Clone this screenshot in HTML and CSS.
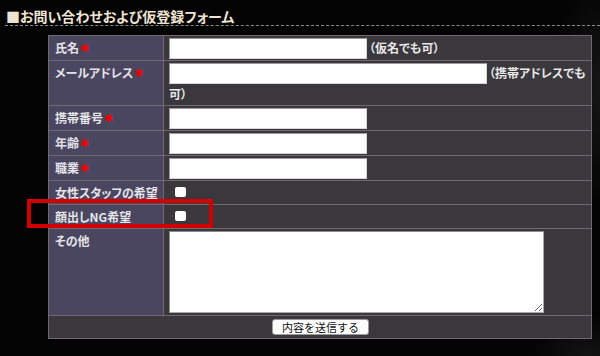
FILE: index.html
```html
<!DOCTYPE html>
<html lang="ja">
<head>
<meta charset="utf-8">
<title>お問い合わせおよび仮登録フォーム</title>
<link rel="stylesheet" href="styles.css">
</head>
<body>
<div class="page">
  <h2 class="title">■お問い合わせおよび仮登録フォーム</h2>
  <table class="form">
    <tr>
      <th>氏名<span class="req">✱</span></th>
      <td class="field"><input class="text short" type="text"><span class="note">（仮名でも可）</span></td>
    </tr>
    <tr>
      <th>メールアドレス<span class="req">✱</span></th>
      <td class="field"><input class="text long" type="text"><span class="note nowrap">（携帯アドレスでも</span><br><span class="note">可）</span></td>
    </tr>
    <tr>
      <th>携帯番号<span class="req">✱</span></th>
      <td class="field"><input class="text short" type="text"></td>
    </tr>
    <tr>
      <th>年齢<span class="req">✱</span></th>
      <td class="field"><input class="text short" type="text"></td>
    </tr>
    <tr>
      <th>職業<span class="req">✱</span></th>
      <td class="field"><input class="text short" type="text"></td>
    </tr>
    <tr>
      <th class="check-label">女性スタッフの希望</th>
      <td class="check"><input class="box" type="checkbox"></td>
    </tr>
    <tr>
      <th class="check-label">顔出しNG希望</th>
      <td class="check"><input class="box" type="checkbox"></td>
    </tr>
    <tr>
      <th>その他</th>
      <td class="area"><textarea class="memo"></textarea></td>
    </tr>
    <tr>
      <td class="submit" colspan="2"><button class="send" type="button">内容を送信する</button></td>
    </tr>
  </table>
</div>
<div class="highlight"></div>
</body>
</html>
```

FILE: styles.css
```css
html, body {
  margin: 0;
  padding: 0;
}

body {
  width: 600px;
  height: 356px;
  overflow: hidden;
  position: relative;
  background:
    radial-gradient(ellipse 50px 120px at 100% 25%, #161616 0, rgba(20,20,20,0) 100%),
    radial-gradient(ellipse 60px 40px at 98% 100%, #141414 0, rgba(20,20,20,0) 100%),
    #030303;
  font-family: "Noto Sans CJK JP", "Noto Sans", sans-serif;
  font-feature-settings: "palt";
}

.page {
  padding-left: 5px;
}

.title {
  margin: 0;
  padding: 8px 0 1px 1px;
  font-size: 14px;
  line-height: 16px;
  font-weight: bold;
  color: #efe3d2;
  border-bottom: 1px dashed #8c8c8c;
}

.form {
  margin: 9px 0 0 43px;
  width: 544px;
  border-collapse: collapse;
  table-layout: fixed;
}

.form th,
.form td {
  border: 1px solid #6d6a72;
}

.form th {
  width: 108px;
  padding: 5px 0 0 6px;
  background: #4b4660;
  color: #e4e4e8;
  font-size: 12px;
  line-height: 14px;
  font-weight: bold;
  text-align: left;
  vertical-align: top;
  white-space: nowrap;
}

.req {
  color: #f00000;
  font-family: "DejaVu Sans", sans-serif;
  font-size: 11px;
  margin-left: 1px;
  position: relative;
  top: -1px;
}

.form td {
  background: #3a373d;
  color: #e8e8e8;
  font-size: 12px;
  font-weight: bold;
  vertical-align: top;
}

.field {
  padding: 2px 5px 1px;
  line-height: 20px;
}

.text {
  box-sizing: border-box;
  height: 21px;
  margin: 0;
  padding: 0 2px;
  vertical-align: top;
  background: #fff;
  border: 1px solid #d6d6d6;
  border-top-color: #9a9a9a;
  border-left-color: #9a9a9a;
}

.short { width: 198px; }
.long { width: 318px; }

.note {
  margin-left: 2px;
}
.nowrap { white-space: nowrap; }
.field br + .note { margin-left: 0; }

.check {
  padding: 3px 5px 0;
  height: 20px;
  line-height: 20px;
}

.box {
  appearance: none;
  -webkit-appearance: none;
  width: 11px;
  height: 10px;
  margin: 3px 0 0 6px;
  background: #fff;
  border: 0;
  border-radius: 2px;
  vertical-align: top;
}

.area {
  padding: 2px 5px 2px;
}

.memo {
  display: block;
  box-sizing: border-box;
  width: 375px;
  height: 82px;
  margin: 0;
  background: #fff;
  border: 1px solid #a9a9a9;
  border-top-color: #8c8c8c;
  border-left-color: #8c8c8c;
}

.submit {
  padding: 3px 0 3px;
  text-align: center;
  line-height: 16px;
}

.send {
  box-sizing: border-box;
  width: 97px;
  height: 16px;
  padding: 0;
  margin: 0 0 0 1px;
  vertical-align: top;
  background: #fff;
  border: 1px solid #9a9a9a;
  border-radius: 3px;
  color: #111;
  font-family: "Noto Sans CJK JP", sans-serif;
  font-size: 11px;
  line-height: 14px;
  font-weight: normal;
}

.highlight {
  position: absolute;
  left: 27px;
  top: 199px;
  width: 178px;
  height: 21px;
  border: 4px solid #d40000;
  pointer-events: none;
}
```
